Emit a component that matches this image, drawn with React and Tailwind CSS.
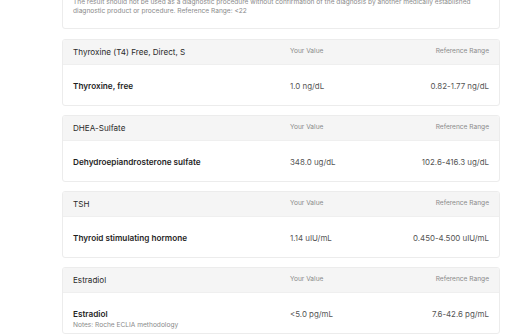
import React from "react";

const results = [
  {
    panel: "Thyroxine (T4) Free, Direct, S",
    name: "Thyroxine, free",
    value: "1.0 ng/dL",
    range: "0.82-1.77 ng/dL",
  },
  {
    panel: "DHEA-Sulfate",
    name: "Dehydroepiandrosterone sulfate",
    value: "348.0 ug/dL",
    range: "102.6-416.3 ug/dL",
  },
  {
    panel: "TSH",
    name: "Thyroid stimulating hormone",
    value: "1.14 uIU/mL",
    range: "0.450-4.500 uIU/mL",
  },
  {
    panel: "Estradiol",
    name: "Estradiol",
    notes: "Notes: Roche ECLIA methodology",
    value: "<5.0 pg/mL",
    range: "7.6-42.6 pg/mL",
  },
];

const ResultCard = ({ r }) => {
  return (
    <div className="rounded-[3px] border border-[#ececec] bg-white overflow-hidden">
      <div className="flex items-center h-[25px] px-[10px] bg-[#f5f5f5] border-b border-[#efefef]">
        <div className="w-[217px] text-[8.1px] text-[#2a2a2a] pt-px">{r.panel}</div>
        <div className="flex-1 text-[6.6px] text-[#8a8a8a]">Your Value</div>
        <div className="text-[6.6px] text-[#8a8a8a] text-right">Reference Range</div>
      </div>
      <div className="flex items-start px-[10px] pt-[15px] min-h-[40px]">
        <div className="w-[217px]">
          <div className="text-[8.2px] leading-[12px] font-semibold text-[#1f1f1f]">{r.name}</div>
          {r.notes && (
            <div className="text-[6.6px] leading-[9px] text-[#8a8a8a] mt-[1px]">{r.notes}</div>
          )}
        </div>
        <div className="flex-1 text-[7.9px] leading-[12px] text-[#555]">{r.value}</div>
        <div className="text-[7.9px] leading-[12px] text-[#555] text-right">{r.range}</div>
      </div>
    </div>
  );
};

export default function App() {
  return (
    <div
      className="w-[524px] h-[334px] overflow-hidden bg-white"
      style={{ fontFamily: "Inter, 'Noto Sans', sans-serif" }}
    >
      <div className="ml-[62px] w-[438px] flex flex-col gap-[9px] mt-[-12px]">
        <div className="rounded-[3px] border border-[#ececec] bg-white px-[10px] pt-[9px] pb-[12px] mb-px">
          <p className="text-[6.6px] leading-[9px] text-[#8a8a8a]">
            The result should not be used as a diagnostic procedure without confirmation of the diagnosis by another medically established diagnostic product or procedure. Reference Range: &lt;22
          </p>
        </div>
        {results.map((r) => (
          <ResultCard key={r.panel} r={r} />
        ))}
      </div>
    </div>
  );
}
